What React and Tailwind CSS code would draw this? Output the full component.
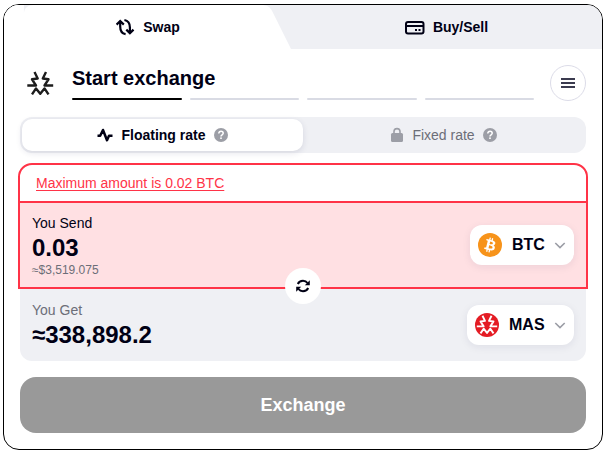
import { useState } from 'react';

const STEPS = ['Start exchange', 'Recipient', 'Payment', 'Done'];

function SwapIcon() {
  return (
    <svg width="20" height="20" viewBox="0 0 20 20" fill="none" stroke="currentColor" strokeWidth="2.2" aria-hidden="true">
      <path d="M1.6 7.6L5.2 4L8.8 7.6M5.2 4.6V9.5C5.2 13.5 7 16.6 10.6 17.2" />
      <path d="M9.4 3C13 3.6 14.9 6.7 14.9 10.5V15.4M11.3 12.6L14.9 16.2L18.5 12.6" />
    </svg>
  );
}

function CardIcon() {
  return (
    <svg width="20" height="20" viewBox="0 0 20 20" fill="none" stroke="currentColor" strokeWidth="2" aria-hidden="true">
      <rect x="1" y="5" width="17.5" height="11.5" rx="2" />
      <path d="M1.5 9H18" />
      <path d="M10 13H12M13.5 13H15.5" />
    </svg>
  );
}

function PulseIcon() {
  return (
    <svg width="16" height="16" viewBox="0 0 16 16" fill="none" stroke="currentColor" strokeWidth="2.5" strokeLinejoin="round" aria-hidden="true">
      <path d="M0.5 8.8H3.2L6 3L10 13.2L12 8.8H15.5" />
    </svg>
  );
}

function LockIcon() {
  return (
    <svg width="14" height="16" viewBox="0 0 14 16" aria-hidden="true">
      <rect x="1" y="6" width="12" height="9" rx="1.5" fill="currentColor" />
      <path d="M4 7V4.6A3 3 0 0 1 10 4.6V7" fill="none" stroke="currentColor" strokeWidth="1.6" />
    </svg>
  );
}

function HelpIcon() {
  return (
    <svg className="text-[#9c9ea6]" width="14" height="14" viewBox="0 0 14 14" aria-hidden="true">
      <circle cx="7" cy="7" r="7" fill="currentColor" />
      <path d="M4.8 5.5C4.8 4.1 5.8 3.3 7 3.3S9.2 4.1 9.2 5.3C9.2 6.8 7 6.8 7 8.4" fill="none" stroke="#fff" strokeWidth="1.5" />
      <rect x="6.2" y="9.4" width="1.6" height="1.6" fill="#fff" />
    </svg>
  );
}

function MassaMark() {
  return (
    <g fill="none" stroke="currentColor" strokeWidth="2.4" strokeLinejoin="round">
      <path d="M7.5 1L10.7 7.5L5 8.3L9 14.5H0.3" />
      <path d="M19 1L15.8 7.5L21.5 8.3L17.5 14.5H26.2" />
      <path d="M5 23.4L9 17.4L13.25 22.8L17.5 17.4L21.5 23.4" />
    </g>
  );
}

function Logo() {
  return (
    <svg className="text-[#1d1d1d]" width="27" height="24" viewBox="0 0 27 24" aria-hidden="true">
      <MassaMark />
    </svg>
  );
}

function RefreshIcon() {
  return (
    <svg width="16" height="16" viewBox="0 0 16 16" aria-hidden="true">
      <path d="M2.8 6C3.8 3.9 5.7 2.8 8 2.8C9.9 2.8 11.5 3.6 12.5 5M13.2 10C12.2 12.1 10.3 13.2 8 13.2C6.1 13.2 4.5 12.4 3.5 11" fill="none" stroke="currentColor" strokeWidth="2" />
      <path d="M14.8 2.2V7.2H9.8ZM1.2 13.8V8.8H6.2Z" fill="currentColor" />
    </svg>
  );
}

function BtcIcon() {
  return (
    <svg width="24" height="24" viewBox="0 0 32 32" aria-hidden="true">
      <circle cx="16" cy="16" r="16" fill="#f7931a" />
      <path
        fill="#fff"
        d="M23.2 14c.3-2.1-1.3-3.2-3.5-4l.7-2.8-1.7-.4-.7 2.7-1.4-.3.7-2.8-1.7-.4-.7 2.8-3.5-.9-.5 1.9s1.3.3 1.2.3c.7.2.8.6.8 1l-2 7.9c-.1.2-.3.5-.8.4l-1.2-.3-.9 2 3.4.8-.7 2.9 1.7.4.7-2.8 1.4.3-.7 2.8 1.7.4.7-2.8c2.9.6 5.1.3 6-2.3.8-2.1 0-3.4-1.5-4.2 1.1-.2 2-1 2.2-2.5zm-3.9 5.5c-.5 2.1-4.1 1-5.3.7l.9-3.8c1.2.3 4.9.9 4.4 3.1zm.5-5.5c-.5 1.9-3.4.9-4.4.7l.9-3.4c1 .2 4 .7 3.5 2.7z"
      />
    </svg>
  );
}

function MasIcon() {
  return (
    <svg className="text-white" width="24" height="24" viewBox="-2 -2.5 30.5 30.5" aria-hidden="true">
      <circle cx="13.25" cy="12.75" r="15.25" fill="#e41c24" />
      <MassaMark />
    </svg>
  );
}

function CoinSelect({ icon, coin, label }) {
  return (
    <div className="relative flex h-10 shrink-0 items-center rounded-xl bg-white shadow-[0_2px_8px_rgba(30,30,80,0.08)]">
      <span className="pointer-events-none absolute left-2">{icon}</span>
      <select
        aria-label={label}
        defaultValue={coin}
        className="h-10 cursor-pointer appearance-none rounded-xl bg-transparent pr-[29px] pl-[42px] text-base font-bold outline-none"
      >
        <option>{coin}</option>
      </select>
      <svg className="pointer-events-none absolute right-2 text-[#9c9ea6]" width="12" height="12" viewBox="0 0 12 12" fill="none" stroke="currentColor" strokeWidth="1.6" aria-hidden="true">
        <path d="M1.3 4L6 8.6L10.7 4" />
      </svg>
    </div>
  );
}

function RateOption({ active, onClick, icon, children }) {
  return (
    <button
      type="button"
      aria-pressed={active}
      onClick={onClick}
      className={`flex h-8 flex-1 items-center justify-center gap-2 rounded-[10px] text-sm ${
        active ? 'bg-white font-bold shadow-[0_2px_6px_rgba(30,30,80,0.12)]' : 'text-[#6c6e78]'
      }`}
    >
      <span className={active ? '' : 'text-[#9c9ea6]'}>{icon}</span>
      {children}
      <HelpIcon />
    </button>
  );
}

export default function App() {
  const [rate, setRate] = useState('floating');
  const [amount, setAmount] = useState('0.03');

  return (
    <main className="mx-[3px] mt-1 overflow-hidden rounded-2xl border border-black bg-white font-['Liberation_Sans',Arial,sans-serif] text-[#000014]">
      <nav className="flex h-11 bg-[#eff0f4] text-sm font-bold">
        <button type="button" className="relative flex w-[48%] items-center justify-center">
          <svg className="absolute inset-0 h-full w-full" viewBox="0 0 288 44" preserveAspectRatio="none" aria-hidden="true">
            <path d="M0 0H20V9C20 3 24 0 30 0H258C264 0 267 2 269 6L288 44H0Z" fill="#fff" />
          </svg>
          <span className="relative flex items-center gap-2">
            <SwapIcon />
            Swap
          </span>
        </button>
        <button type="button" className="flex flex-1 items-center justify-center gap-2">
          <CardIcon />
          Buy/Sell
        </button>
      </nav>

      <div className="px-4 pt-4 pb-4">
        <header className="flex h-9 items-center">
          <span className="flex w-10 shrink-0 justify-center">
            <Logo />
          </span>
          <div className="mx-3 flex-1">
            <h1 className="text-xl leading-6 font-bold">Start exchange</h1>
            <div className="mt-2 flex gap-2">
              {STEPS.map((step, i) => (
                <span key={step} className={`h-[2px] flex-1 rounded-full ${i === 0 ? 'bg-black' : 'bg-[#d9dbe4]'}`} />
              ))}
            </div>
          </div>
          <button
            type="button"
            aria-label="Menu"
            className="ml-1 flex size-9 shrink-0 items-center justify-center rounded-full border border-[#dcdce8] text-[#3b3b4f]"
          >
            <svg width="14" height="12" viewBox="0 0 14 12" stroke="currentColor" strokeWidth="2" aria-hidden="true">
              <path d="M0 2H14M0 6H14M0 10H14" />
            </svg>
          </button>
        </header>

        <div className="mt-4 flex rounded-xl bg-[#eff0f4] p-[2px]">
          <RateOption active={rate === 'floating'} onClick={() => setRate('floating')} icon={<PulseIcon />}>
            Floating rate
          </RateOption>
          <RateOption active={rate === 'fixed'} onClick={() => setRate('fixed')} icon={<LockIcon />}>
            Fixed rate
          </RateOption>
        </div>

        <section className="relative -mx-[2px] mt-[10px] rounded-t-[14px] border-2 border-[#ff3347]">
          <div className="flex h-9 items-center px-4 text-sm text-[#ff3347]">
            <button type="button" className="underline underline-offset-2">
              Maximum amount is 0.02 BTC
            </button>
          </div>
          <div className="flex items-center justify-between border-t-2 border-[#ff3347] bg-[#ffe0e3] px-3 py-[10px]">
            <div className="min-w-0 flex-1">
              <label htmlFor="send" className="block text-sm leading-5">
                You Send
              </label>
              <input
                id="send"
                value={amount}
                onChange={(e) => setAmount(e.target.value)}
                className="block h-[30px] w-full bg-transparent text-2xl font-bold outline-none"
              />
              <p className="text-xs leading-[14px] text-[#6c6e78]">≈$3,519.075</p>
            </div>
            <CoinSelect icon={<BtcIcon />} coin="BTC" label="Send currency" />
          </div>
          <button
            type="button"
            aria-label="Switch currencies"
            className="absolute -bottom-[17px] left-1/2 flex size-9 -translate-x-1/2 items-center justify-center rounded-full bg-white"
          >
            <RefreshIcon />
          </button>
        </section>

        <section className="flex h-18 items-center justify-between rounded-b-xl bg-[#eff0f4] px-3">
          <div className="min-w-0 flex-1">
            <label htmlFor="get" className="block text-sm leading-5 text-[#6c6e78]">
              You Get
            </label>
            <input
              id="get"
              readOnly
              value="≈338,898.2"
              className="block h-[30px] w-full bg-transparent text-2xl font-bold outline-none"
            />
          </div>
          <CoinSelect icon={<MasIcon />} coin="MAS" label="Get currency" />
        </section>

        <button type="button" className="mt-4 h-14 w-full rounded-2xl bg-[#999] text-lg font-bold text-white">
          Exchange
        </button>
      </div>
    </main>
  );
}
